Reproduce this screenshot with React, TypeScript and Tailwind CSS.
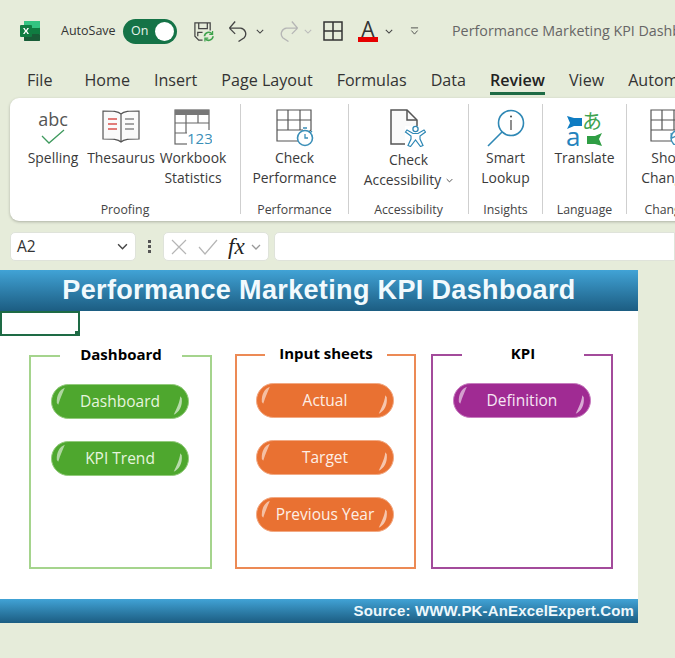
import React from 'react';

const ui = { fontFamily: '"Open Sans", "Noto Sans", sans-serif' };

const Chevron = ({ className = '', color = '#444' }: { className?: string; color?: string }) => (
  <svg viewBox="0 0 10 6" className={className} fill="none" stroke={color} strokeWidth="1.3">
    <path d="M1 1l4 4 4-4" />
  </svg>
);

const ExcelLogo = () => (
  <svg viewBox="0 0 20 20" className="w-5 h-5 ml-5">
    <rect x="4" y="0" width="16" height="20" rx="1" fill="#21a366" />
    <rect x="4" y="0" width="16" height="7" rx="1" fill="#33c481" />
    <rect x="12" y="7" width="8" height="6" fill="#107c41" />
    <rect x="4" y="13" width="16" height="7" rx="1" fill="#185c37" />
    <rect x="0" y="4" width="12" height="12" rx="1" fill="#107c41" />
    <path d="M3 7l2 3-2 3h1.6L6 10.8 7.4 13H9L7 10l2-3H7.400L6 9.2 4.600 7z" fill="#fff" />
  </svg>
);

const TopBar = () => (
  <div className="h-[62px] flex items-center shrink-0 *:shrink-0">
    <ExcelLogo />
    <span className="ml-[21px] text-[12.5px] w-[53px] whitespace-nowrap text-[#333]">AutoSave</span>
    <div className="ml-[9px] w-[54px] h-[25px] rounded-full bg-[#157347] flex items-center justify-between pl-2 pr-[3px]">
      <span className="text-[12.5px] text-[#e8f3ec]">On</span>
      <span className="w-[19px] h-[19px] rounded-full bg-white" />
    </div>
    <svg viewBox="0 0 22 22" className="ml-4 w-[21px] h-[21px]" fill="none">
      <path d="M10 20H6l-4-4V2h16v8" stroke="#444" strokeWidth="1.300" />
      <path d="M6 2v6h9V2M5 16v-4h5" stroke="#444" strokeWidth="1.300" />
      <path d="M12 16a4.500 4.500 0 0 1 8-2.500M21 16a4.500 4.500 0 0 1-8 2.500" stroke="#3fa34d" strokeWidth="1.700" />
      <path d="M20.500 10.500v3.500H17M12.500 21.500V18H16" stroke="#3fa34d" strokeWidth="1.300" />
    </svg>
    <svg viewBox="0 0 22 22" className="ml-[14px] w-[21px] h-[22px]" fill="none" stroke="#444" strokeWidth="1.400">
      <path d="M1.500 8H13a6 6 0 0 1 4 10l-6 4M1.500 8l6-7M1.500 8l6 6" />
    </svg>
    <Chevron className="ml-[7px] w-2 h-[5px]" />
    <svg viewBox="0 0 22 22" className="ml-[14px] w-[21px] h-[22px]" fill="none" stroke="#b5b5b5" strokeWidth="1.400">
      <path d="M20.500 8H9a6 6 0 0 0-4 10l6 4M20.500 8l-6-7M20.500 8l-6 6" />
    </svg>
    <Chevron className="ml-[5px] w-2 h-[5px]" color="#bbb" />
    <svg viewBox="0 0 20 20" className="ml-[11px] w-5 h-5" fill="none" stroke="#333" strokeWidth="1.500">
      <rect x="1" y="1" width="18" height="18" />
      <path d="M10 1v18M1 10h18" />
    </svg>
    <div className="ml-[15px] w-5 h-[21px] flex flex-col items-center justify-between">
      <span className="text-[21px] leading-[16px] text-[#333]">A</span>
      <span className="w-5 h-[5px] bg-[#e60000]" />
    </div>
    <Chevron className="ml-[7px] w-2 h-[5px]" />
    <svg viewBox="0 0 10 9" className="ml-[17px] w-[9px] h-2" fill="none" stroke="#444" strokeWidth="1">
      <path d="M1 1h8M1.500 4l3.500 4 3.500-4" />
    </svg>
    <span className="ml-[33px] text-[14.300px] whitespace-nowrap text-[#666]">Performance Marketing KPI Dashboard</span>
  </div>
);

const tabs = ['Home', 'Insert', 'Page Layout', 'Formulas', 'Data', 'Review', 'View', 'Automate'];

const TabRow = () => (
  <div className="h-[36px] flex gap-6 pl-[27px] text-[16.100px] text-[#333] whitespace-nowrap shrink-0">
    <span className="mr-2 pt-[6px]">File</span>
    {tabs.map((t) =>
      t === 'Review' ? (
        <span key={t} className="pt-[6px] h-[33px] font-semibold border-b-[3px] border-[#1e6b45] text-[#222]">
          {t}
        </span>
      ) : (
        <span key={t} className="pt-[6px]">
          {t}
        </span>
      ),
    )}
  </div>
);

const SpellIcon = () => (
  <div className="flex flex-col items-center">
    <span className="text-[18px] leading-[20px] text-[#555]">abc</span>
    <svg viewBox="0 0 24 15" className="w-6 h-[15px]">
      <path d="M1 7l7 7L23 1" fill="none" stroke="#3f9a5e" strokeWidth="1.300" />
    </svg>
  </div>
);

const BookIcon = () => (
  <svg viewBox="0 0 38 34" className="w-[38px] h-[34px]" fill="none">
    <path d="M19 5c-3-3-8-3-18-3v28c10 0 15 0 18 3 3-3 8-3 18-3V2c-10 0-15 0-18 3z M19 5v28" fill="#fafafa" stroke="#555" strokeWidth="1.200" />
    <path d="M6 10h9M6 15h9M6 20h9" stroke="#d9534f" strokeWidth="1.400" />
    <path d="M23 10h9M23 15h9M23 20h9" stroke="#888" strokeWidth="1.400" />
  </svg>
);

const StatsIcon = () => (
  <svg viewBox="0 0 38 36" className="w-[38px] h-[36px]" fill="none">
    <rect x="1" y="1" width="34" height="34" fill="#fff" stroke="#666" strokeWidth="1.200" />
    <rect x="1" y="1" width="34" height="5" fill="#777" />
    <path d="M1 14h34M1 24h12M12 6v18M24 6v8" stroke="#666" strokeWidth="1.200" />
    <rect x="13" y="21" width="25" height="15" fill="#fff" />
    <text x="13" y="35" fontSize="15" fill="#3b8fb8" fontFamily="'Open Sans', sans-serif">123</text>
  </svg>
);

const PerfIcon = () => (
  <svg viewBox="0 0 38 38" className="w-[38px] h-[38px]" fill="none">
    <path d="M1 1h34v20l-12 11H1z" fill="#fff" stroke="#555" strokeWidth="1.200" />
    <path d="M1 11h34M1 21h26M12 1v20M24 1v20" stroke="#555" strokeWidth="1.200" />
    <circle cx="29" cy="29" r="7.500" fill="#fff" stroke="#3b8fb8" strokeWidth="1.600" />
    <path d="M29 25v4h3M27 19h4M36 22l-2 2" stroke="#3b8fb8" strokeWidth="1.300" />
  </svg>
);

const AccessIcon = () => (
  <svg viewBox="0 0 36 38" className="w-[36px] h-[38px]" fill="none">
    <path d="M1 1h16l10 10v24H1z" fill="#fafafa" stroke="#555" strokeWidth="1.500" />
    <path d="M17 1v10h10" stroke="#555" strokeWidth="1.500" />
    <rect x="15" y="17" width="21" height="21" fill="#fff" />
    <circle cx="25.500" cy="20" r="2.600" fill="#fff" stroke="#2f88b5" strokeWidth="1.300" />
    <path d="M17 21l6 3.500h5L34 21l1.500 2-5.500 4v3l3 6.500-2.500 1-5-6.500-5 6.500-2.500-1 3-6.500v-3L15.500 23z" fill="#fff" stroke="#2f88b5" strokeWidth="1.200" />
  </svg>
);

const LookupIcon = () => (
  <svg viewBox="0 0 38 38" className="w-[38px] h-[38px]" fill="none">
    <circle cx="24" cy="14" r="12.500" stroke="#2f88b5" strokeWidth="1.600" />
    <path d="M15 23L1 37" stroke="#2f88b5" strokeWidth="1.600" />
    <path d="M24 11v10" stroke="#444" strokeWidth="1.200" />
    <circle cx="24" cy="7.500" r="1" fill="#444" />
  </svg>
);

const TranslateIcon = () => (
  <svg viewBox="0 0 38 38" className="w-[38px] h-[38px]">
    <path d="M2 7l7 2h8v8H9l-7 3 3-6z" fill="#0f7cc2" />
    <path d="M37 37l-7-2h-8v-8h8l7-3-3 6z" fill="#2f9e44" />
    <text x="17" y="20" fontSize="20" fill="#3da34f" fontFamily="'Noto Sans CJK JP', sans-serif">あ</text>
    <text x="1" y="37" fontSize="26" fill="#2483bd" fontFamily="'Open Sans', sans-serif">a</text>
  </svg>
);

const ChangesIcon = () => (
  <svg viewBox="0 0 38 36" className="w-[38px] h-[36px]" fill="none">
    <path d="M1 1h34v20l-12 11H1z" fill="#fff" stroke="#555" strokeWidth="1.200" />
    <path d="M1 11h34M1 21h26M12 1v20M24 1v20" stroke="#555" strokeWidth="1.200" />
    <circle cx="29" cy="29" r="8" fill="#fff" stroke="#3b8fb8" strokeWidth="1.500" />
    <path d="M21 24l1 5 4-2" fill="none" stroke="#3b8fb8" strokeWidth="1.300" />
  </svg>
);

const Cmd = ({ icon, lines, className = '' }: { icon: React.ReactNode; lines: React.ReactNode[]; className?: string }) => (
  <div className={`flex flex-col items-center shrink-0 ${className}`}>
    <div className="h-[42px] pt-[3px] flex items-start justify-center">{icon}</div>
    <div className="text-[13.900px] leading-[20px] text-[#3a3a3a] text-center whitespace-nowrap">
      {lines.map((l, i) => (
        <div key={i}>{l}</div>
      ))}
    </div>
  </div>
);

const Group = ({ label, width, last, children }: { label: string; width: string; last?: boolean; children: React.ReactNode }) => (
  <div className={`h-[110px] shrink-0 flex flex-col ${width} ${last ? '' : 'border-r border-[#cfcfcf]'}`}>
    <div className="flex-1 flex justify-center">{children}</div>
    <div className="text-[12.300px] leading-[16px] mb-[-4px] text-[#444] text-center whitespace-nowrap">{label}</div>
  </div>
);

const Ribbon = () => (
  <div className="ml-[10px] h-[123px] w-[700px] rounded-l-[9px] bg-white shadow-[0_1px_3px_rgba(0,0,0,0.25)] flex pt-[6px] overflow-hidden shrink-0">
    <Group label="Proofing" width="w-[231px]">
      <div className="flex pt-[2px]">
        <Cmd icon={<SpellIcon />} lines={['Spelling']} className="w-[70px]" />
        <Cmd icon={<BookIcon />} lines={['Thesaurus']} className="w-[66px]" />
        <Cmd icon={<StatsIcon />} lines={['Workbook', 'Statistics']} className="w-[78px]" />
      </div>
    </Group>
    <Group label="Performance" width="w-[108px]">
      <Cmd icon={<PerfIcon />} lines={['Check', 'Performance']} className="pt-[2px]" />
    </Group>
    <Group label="Accessibility" width="w-[120px]">
      <Cmd
        icon={<AccessIcon />}
        lines={[
          <div className="pt-[2px]">Check</div>,
          <span className="flex items-center gap-[5px]">
            Accessibility <Chevron className="w-[7px] h-[5px]" />
          </span>,
        ]}
        className="pt-[2px]"
      />
    </Group>
    <Group label="Insights" width="w-[74px]">
      <Cmd icon={<LookupIcon />} lines={['Smart', 'Lookup']} className="pt-[2px]" />
    </Group>
    <Group label="Language" width="w-[84px]">
      <Cmd icon={<TranslateIcon />} lines={['Translate']} className="pt-[2px]" />
    </Group>
    <Group label="Changes" width="w-[84px]" last>
      <Cmd icon={<ChangesIcon />} lines={['Show', 'Changes']} className="pt-[2px]" />
    </Group>
  </div>
);

const FormulaBar = () => (
  <div className="mt-[11px] ml-[10px] flex items-center h-[29px] shrink-0">
    <div className="w-[126px] h-[29px] bg-white border border-[#dfe3da] rounded-[5px] flex items-center justify-between pl-[6px] pr-[7px] text-[15.500px] text-[#333]">
      A2 <Chevron className="w-[11px] h-[7px]" />
    </div>
    <div className="w-[27px] flex flex-col items-center gap-[2px]">
      <span className="w-[3px] h-[3px] bg-[#555]" />
      <span className="w-[3px] h-[3px] bg-[#555]" />
      <span className="w-[3px] h-[3px] bg-[#555]" />
    </div>
    <div className="w-[106px] h-[29px] bg-white border border-[#dfe3da] rounded-[5px] flex items-center pl-[7px]">
      <svg viewBox="0 0 16 16" className="w-4 h-4" fill="none" stroke="#b5b5b5" strokeWidth="1.200">
        <path d="M1 1l14 14M15 1L1 15" />
      </svg>
      <svg viewBox="0 0 20 16" className="ml-[11px] w-5 h-4" fill="none" stroke="#b5b5b5" strokeWidth="1.200">
        <path d="M1 8l6 7L19 1" />
      </svg>
      <span className="ml-[10px] text-[23px] leading-none italic text-[#222]" style={{ fontFamily: '"Liberation Serif", serif' }}>
        fx
      </span>
      <Chevron className="ml-[6px] w-[10px] h-[6px]" color="#999" />
    </div>
    <div className="ml-[5px] flex-1 h-[29px] bg-white border border-[#dfe3da] rounded-l-[5px]" />
  </div>
);

const PillButton = ({ label, tone }: { label: string; tone: 'green' | 'orange' | 'purple' }) => {
  const cls = {
    green: 'bg-[#4ea72e] border-[#93cb7c] text-[#e6f5de]',
    orange: 'bg-[#e97132] border-[#f2a983] text-[#fdefe6]',
    purple: 'bg-[#a02b93] border-[#c77dbf] text-[#f6e6f4]',
  }[tone];
  return (
    <div className={`relative w-[138px] h-[35px] rounded-full border flex items-center justify-center text-[15.500px] ${cls}`}>
      {label}
      <svg viewBox="0 0 138 35" className="absolute inset-0 w-full h-full">
        <path d="M2 19C1.500 11 5 5 10.500 3 8.500 8 6 13 3.500 21z" fill="#fff" fillOpacity="0.55" />
        <path d="M134.500 14C135.500 23 131.500 29 126 31.500 128.500 26 132 20 133 12z" fill="#fff" fillOpacity="0.6" />
      </svg>
    </div>
  );
};

const Frame = ({ title, border, className, titleLeft = 'left-[29px]', children }: { title: string; border: string; className: string; titleLeft?: string; children: React.ReactNode }) => (
  <div className={`relative border-2 shrink-0 ${border} ${className}`}>
    <div className={`absolute ${titleLeft} -top-[13px] w-[122px] h-[23px] bg-white text-center text-[15px] leading-[20px] font-bold text-black`}>
      {title}
    </div>
    {children}
  </div>
);

const Sheet = () => (
  <div className="relative mt-[9px] w-[638px] h-[353px] bg-white flex flex-col shrink-0">
    <div className="h-[41px] shrink-0 bg-gradient-to-b from-[#41a3d6] to-[#1c5d82] text-center text-[27px] leading-[40px] font-bold tracking-[0.35px] text-[#f2fafd]" style={{ fontFamily: '"Liberation Sans", sans-serif' }}>
      Performance Marketing KPI Dashboard
    </div>
    <div className="absolute left-0 top-[41px] w-[80px] h-[25px] border-2 border-[#1e6b45]">
      <span className="absolute -right-[2px] -bottom-[2px] w-[5px] h-[5px] bg-[#1e6b45]" />
    </div>
    <div className="flex-1 flex items-start pl-[29px]">
      <Frame title="Dashboard" border="border-[#a5d48d]" className="mt-[44px] w-[183px] h-[214px]">
        <div className="pl-5 pt-[27px] flex flex-col gap-[22px]">
          <PillButton label="Dashboard" tone="green" />
          <PillButton label="KPI Trend" tone="green" />
        </div>
      </Frame>
      <Frame title="Input sheets" border="border-[#ec8a55]" titleLeft="left-[28px]" className="mt-[43px] ml-[23px] w-[181px] h-[215px]">
        <div className="pl-[19px] pt-[27px] flex flex-col gap-[22px]">
          <PillButton label="Actual" tone="orange" />
          <PillButton label="Target" tone="orange" />
          <PillButton label="Previous Year" tone="orange" />
        </div>
      </Frame>
      <Frame title="KPI" border="border-[#a34b9b]" className="mt-[43px] ml-[15px] w-[182px] h-[215px]">
        <div className="pl-5 pt-[27px]">
          <PillButton label="Definition" tone="purple" />
        </div>
      </Frame>
    </div>
    <div className="h-[24px] shrink-0 bg-gradient-to-b from-[#41a3d6] to-[#1c5d82] pr-1 text-right text-[15px] leading-[24px] font-bold tracking-[0.17px] text-[#eef8fc]" style={{ fontFamily: '"Liberation Sans", sans-serif' }}>
      Source: WWW.PK-AnExcelExpert.Com
    </div>
  </div>
);

export default function App() {
  return (
    <div className="w-[675px] h-[658px] overflow-hidden bg-[#e6ecda] flex flex-col" style={ui}>
      <TopBar />
      <TabRow />
      <Ribbon />
      <FormulaBar />
      <Sheet />
    </div>
  );
}
